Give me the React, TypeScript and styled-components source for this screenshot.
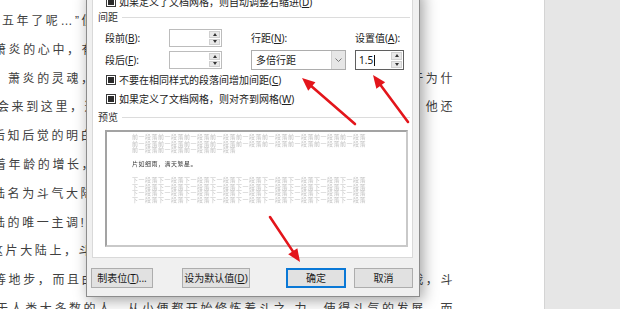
import styled, { createGlobalStyle } from 'styled-components';

const GlobalStyle = createGlobalStyle`
  html, body {
    margin: 0;
    padding: 0;
  }
  body {
    width: 620px;
    height: 309px;
    overflow: hidden;
    background: #e6e6e6;
    font-family: "Noto Sans CJK SC", sans-serif;
  }
`;

const Screen = styled.div`
  position: relative;
  display: flex;
  width: 620px;
  height: 309px;
  overflow: hidden;
`;

const Page = styled.div`
  flex: none;
  width: 544px;
  box-sizing: border-box;
  padding-top: 7px;
  background: #fff;
  overflow: hidden;
  font-family: "Liberation Sans", "Noto Sans CJK SC", sans-serif;
  font-size: 12px;
  line-height: 28.8px;
  letter-spacing: 2.6px;
  color: #404040;
`;

const Line = styled.div<{ $shift: number }>`
  display: flex;
  justify-content: space-between;
  height: 28.8px;
  margin: 0 89px 0 ${p => p.$shift}px;
  white-space: nowrap;
`;

const Workspace = styled.div`
  flex: 1;
  background: #e6e6e6;
  border-left: 1px solid #d4d4d4;
`;

const Dialog = styled.div`
  position: absolute;
  left: 86px;
  top: -11px;
  width: 334px;
  box-sizing: border-box;
  padding: 0 6px 8px 5px;
  background: #f0f0f0;
  border: 1px solid #8c8c8c;
  box-shadow: 3px 3px 14px rgba(0, 0, 0, 0.38);
  font-family: "Noto Sans", "Noto Sans CJK SC", sans-serif;
  font-size: 10px;
  line-height: 12px;
  color: #222;
`;

const TabPage = styled.div`
  display: flex;
  flex-direction: column;
  padding: 2px 2px 10px 5px;
  background: #fff;
  border: 1px solid #d9d9d9;
  border-top: none;
`;

const Key = styled.u`
  text-decoration: underline;
`;

const CheckRow = styled.div`
  display: flex;
  align-items: center;
  gap: 3px;
  height: 19px;
  margin-left: 8px;
  white-space: nowrap;
`;

const Check = styled.span`
  flex: none;
  display: flex;
  align-items: center;
  justify-content: center;
  width: 10px;
  height: 10px;
  box-sizing: border-box;
  border: 1px solid #3a3a3a;
  background: #fff;

  &::after {
    content: '';
    width: 6px;
    height: 6px;
    background: #2a2a2a;
  }
`;

const SectionHead = styled.div<{ $top: number }>`
  display: flex;
  align-items: center;
  gap: 4px;
  height: 12px;
  margin-top: ${p => p.$top}px;
  color: #333;

  &::after {
    content: '';
    flex: 1;
    height: 1px;
    background: #dcdcdc;
  }
`;

const SpacingGrid = styled.div`
  display: grid;
  grid-template-columns: 64px 53px 29px 95px 9px 49px;
  grid-template-rows: 20px 20px;
  grid-template-areas:
    "l1 i1 . l3 . l4"
    "l2 i2 . s3 . v4";
  row-gap: 2px;
  align-items: center;
  margin: 5px 0 0 7px;
`;

const Cell = styled.div<{ $area: string }>`
  grid-area: ${p => p.$area};
  white-space: nowrap;
`;

const SpinBox = styled.div<{ $area: string; $focus?: boolean }>`
  grid-area: ${p => p.$area};
  display: flex;
  height: ${p => (p.$focus ? 20 : 18)}px;
  box-sizing: border-box;
  border: 1px solid ${p => (p.$focus ? '#5f5f5f' : '#bcbcbc')};
  background: #fff;
`;

const SpinValue = styled.div`
  flex: 1;
  display: flex;
  align-items: center;
  padding-left: 3px;
  color: #111;
`;

const Caret = styled.span`
  width: 1px;
  height: 11px;
  margin-left: 1px;
  background: #111;
`;

const SpinButtons = styled.div`
  display: flex;
  flex-direction: column;
  gap: 1px;
  width: 11px;
  padding: 1px;
`;

const SpinArrow = styled.div<{ $down?: boolean }>`
  flex: 1;
  display: flex;
  align-items: center;
  justify-content: center;
  background: #e8e8e8;
  border: 1px solid #d0d0d0;

  &::after {
    content: '';
    border-left: 2.5px solid transparent;
    border-right: 2.5px solid transparent;
    ${p => (p.$down ? 'border-top' : 'border-bottom')}: 3px solid #333;
  }
`;

const Select = styled.div<{ $area: string }>`
  grid-area: ${p => p.$area};
  display: flex;
  height: 20px;
  box-sizing: border-box;
  border: 1px solid #adadad;
  background: #fff;
`;

const SelectValue = styled.div`
  flex: 1;
  display: flex;
  align-items: center;
  padding-left: 4px;
`;

const SelectButton = styled.div`
  display: flex;
  align-items: center;
  justify-content: center;
  width: 13px;
  background: #e6e6e6;
  border-left: 1px solid #cfcfcf;
`;

const Preview = styled.div`
  height: 117px;
  margin: 7px 2px 0 7px;
  box-sizing: border-box;
  padding: 2px 0 0 25px;
  background: #fff;
  border: 2px solid #a3a3a3;
  border-right-color: #c9c9c9;
  border-bottom-color: #c9c9c9;
  font-family: "Noto Sans CJK SC", sans-serif;
  font-size: 6px;
  line-height: 6.5px;
  letter-spacing: 0.5px;
`;

const PreviewText = styled.div<{ $sample?: boolean; $top: number }>`
  width: 235px;
  margin-top: ${p => p.$top}px;
  color: ${p => (p.$sample ? '#3a3a3a' : '#c2c2c2')};
  word-break: break-all;
  will-change: transform;
`;

const ButtonBar = styled.div`
  display: flex;
  justify-content: space-between;
  margin: 10px 0 0 -1px;
`;

const ButtonGroup = styled.div<{ $gap: number }>`
  display: flex;
  gap: ${p => p.$gap}px;
`;

const Button = styled.button<{ $w: number; $primary?: boolean }>`
  width: ${p => p.$w}px;
  height: 20px;
  padding: 0;
  box-sizing: border-box;
  background: #e1e1e1;
  border: ${p => (p.$primary ? '2px solid #0a78d6' : '1px solid #adadad')};
  font-family: inherit;
  font-size: 10px;
  line-height: 12px;
  color: #1a1a1a;
  white-space: nowrap;
`;

const Annotations = styled.svg`
  position: absolute;
  left: 0;
  top: 0;
  pointer-events: none;
`;

const lines = [
  { shift: 2, left: '五年了呢…”低低的声音', right: '' },
  { shift: -6, left: '萧炎的心中，有着一丝', right: '' },
  { shift: 8, left: '萧炎的灵魂，', right: '于为什' },
  { shift: -3, left: '会来到这里，这', right: '他还' },
  { shift: -7, left: '后知后觉的明白', right: '' },
  { shift: -6, left: '着年龄的增长，', right: '' },
  { shift: -7, left: '陆名为斗气大陆', right: '' },
  { shift: -7, left: '陆的唯一主调!', right: '' },
  { shift: -9, left: '这片大陆上，斗', right: '' },
  { shift: -6, left: '等地步，而且由', right: '我，斗' },
  { shift: -4, left: '于人类大多数的人，从小便都开始修炼着斗之', right: '力，使得斗气的发展，而' },
];

const arrows = [
  { from: [355, 124], to: [302, 78] },
  { from: [408, 122], to: [373, 75] },
  { from: [270, 217], to: [300, 262] },
];

const Arrow = ({ from, to }: { from: number[]; to: number[] }) => {
  const dx = to[0] - from[0];
  const dy = to[1] - from[1];
  const len = Math.hypot(dx, dy);
  const ux = dx / len;
  const uy = dy / len;
  const bx = to[0] - ux * 13;
  const by = to[1] - uy * 13;
  const nx = -uy * 5.5;
  const ny = ux * 5.5;
  return (
    <g>
      <line x1={from[0]} y1={from[1]} x2={bx + ux * 2} y2={by + uy * 2} stroke="#e3151b" strokeWidth={2.6} strokeLinecap="round" />
      <polygon points={`${to[0]},${to[1]} ${bx + nx},${by + ny} ${bx - nx},${by - ny}`} fill="#e3151b" />
    </g>
  );
};

const SpinInput = ({ area, value, focus }: { area: string; value?: string; focus?: boolean }) => (
  <SpinBox $area={area} $focus={focus}>
    <SpinValue>
      {value}
      {focus && <Caret />}
    </SpinValue>
    <SpinButtons>
      <SpinArrow />
      <SpinArrow $down />
    </SpinButtons>
  </SpinBox>
);

const App = () => {
  return (
    <>
      <GlobalStyle />
      <Screen>
        <Page>
          {lines.map((l, i) => (
            <Line key={i} $shift={l.shift}>
              <span>{l.left}</span>
              <span>{l.right}</span>
            </Line>
          ))}
        </Page>
        <Workspace />

        <Dialog>
          <TabPage>
            <CheckRow>
              <Check />
              <span>如果定义了文档网格，则自动调整右缩进(<Key>D</Key>)</span>
            </CheckRow>
            <SectionHead $top={0}>间距</SectionHead>
            <SpacingGrid>
              <Cell $area="l1">段前(<Key>B</Key>):</Cell>
              <SpinInput area="i1" />
              <Cell $area="l3">行距(<Key>N</Key>):</Cell>
              <Cell $area="l4">设置值(<Key>A</Key>):</Cell>
              <Cell $area="l2">段后(<Key>F</Key>):</Cell>
              <SpinInput area="i2" />
              <Select $area="s3">
                <SelectValue>多倍行距</SelectValue>
                <SelectButton>
                  <svg width="7" height="4" viewBox="0 0 7 4">
                    <path d="M0.5 0.5 L3.5 3.5 L6.5 0.5" fill="none" stroke="#777" strokeWidth="1" />
                  </svg>
                </SelectButton>
              </Select>
              <SpinInput area="v4" value="1.5" focus />
            </SpacingGrid>
            <CheckRow>
              <Check />
              <span>不要在相同样式的段落间增加间距(<Key>C</Key>)</span>
            </CheckRow>
            <CheckRow>
              <Check />
              <span>如果定义了文档网格，则对齐到网格(<Key>W</Key>)</span>
            </CheckRow>
            <SectionHead $top={3}>预览</SectionHead>
            <Preview>
              <PreviewText $top={0}>{'前一段落'.repeat(22)}</PreviewText>
              <PreviewText $top={7} $sample>片如细雨，满天繁星。</PreviewText>
              <PreviewText $top={9.5}>{'下一段落'.repeat(36)}</PreviewText>
            </Preview>
          </TabPage>
          <ButtonBar>
            <ButtonGroup $gap={29}>
              <Button $w={62}>制表位(<Key>T</Key>)...</Button>
              <Button $w={68}>设为默认值(<Key>D</Key>)</Button>
            </ButtonGroup>
            <ButtonGroup $gap={8}>
              <Button $w={60} $primary>确定</Button>
              <Button $w={59}>取消</Button>
            </ButtonGroup>
          </ButtonBar>
        </Dialog>

        <Annotations width="620" height="309" viewBox="0 0 620 309">
          {arrows.map((a, i) => (
            <Arrow key={i} from={a.from} to={a.to} />
          ))}
        </Annotations>
      </Screen>
    </>
  );
};

export default App;
